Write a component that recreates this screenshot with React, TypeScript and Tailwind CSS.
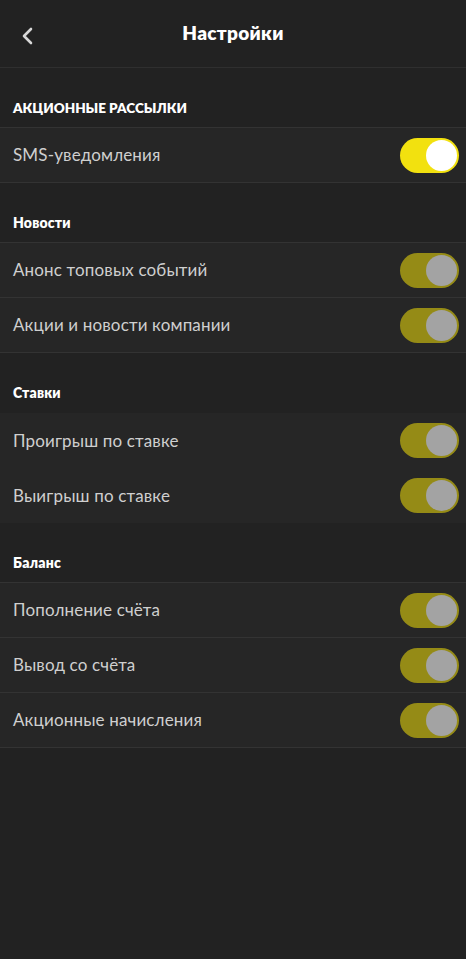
import { useState } from 'react';

type Item = { id: string; label: string; on: boolean };
type Section = { title: string; items: Item[]; divided: boolean; caps?: boolean };

const sections: Section[] = [
  {
    title: 'АКЦИОННЫЕ РАССЫЛКИ',
    divided: true,
    caps: true,
    items: [{ id: 'sms', label: 'SMS-уведомления', on: true }],
  },
  {
    title: 'Новости',
    divided: true,
    items: [
      { id: 'top', label: 'Анонс топовых событий', on: false },
      { id: 'promo', label: 'Акции и новости компании', on: false },
    ],
  },
  {
    title: 'Ставки',
    divided: false,
    items: [
      { id: 'lose', label: 'Проигрыш по ставке', on: false },
      { id: 'win', label: 'Выигрыш по ставке', on: false },
    ],
  },
  {
    title: 'Баланс',
    divided: true,
    items: [
      { id: 'dep', label: 'Пополнение счёта', on: false },
      { id: 'out', label: 'Вывод со счёта', on: false },
      { id: 'bonus', label: 'Акционные начисления', on: false },
    ],
  },
];

function Toggle({ on, onClick }: { on: boolean; onClick: () => void }) {
  return (
    <button
      onClick={onClick}
      className={
        on
          ? 'flex h-[35px] w-[59px] items-center justify-end rounded-full bg-[#f2e10f] px-[2px]'
          : 'flex h-[35px] w-[59px] items-center justify-end rounded-full bg-[#958b16] px-[2px]'
      }
    >
      <span
        className={
          on
            ? 'block h-[31px] w-[31px] rounded-full bg-white'
            : 'block h-[31px] w-[31px] rounded-full bg-[#a3a3a3]'
        }
      />
    </button>
  );
}

export default function App() {
  const [state, setState] = useState<Record<string, boolean>>(() => {
    const s: Record<string, boolean> = {};
    sections.forEach((sec) => sec.items.forEach((it) => (s[it.id] = it.on)));
    return s;
  });

  return (
    <div className="min-h-[959px] w-full bg-[#222222] font-['Lato','Noto_Sans',sans-serif]">
      {/* Header */}
      <div className="relative flex h-[68px] items-center justify-center border-b border-[#2f2f2f]">
        <button className="absolute left-[16px] top-[22px] p-1">
          <svg width="16" height="20" viewBox="0 0 16 20" fill="none">
            <path d="M11 3 L4 10 L11 17" stroke="#d8d8d8" strokeWidth="2.6" strokeLinecap="round" strokeLinejoin="round" />
          </svg>
        </button>
        <h1 className="text-[19px] font-extrabold tracking-[0.3px] text-white">Настройки</h1>
      </div>

      {sections.map((sec) => (
        <div key={sec.title}>
          <div className="flex h-[59px] items-end px-[13px] pb-[9px]">
            <span
              className={
                sec.caps
                  ? 'text-[13.5px] font-extrabold leading-[20px] text-white'
                  : 'text-[14px] font-extrabold leading-[20px] tracking-[0.2px] text-white'
              }
            >
              {sec.title}
            </span>
          </div>
          <div className={sec.divided ? 'border-t border-[#333333]' : 'border-t border-[#222222]'}>
            {sec.items.map((it) => (
              <div
                key={it.id}
                className={
                  sec.divided
                    ? 'flex h-[55px] items-center justify-between border-b border-[#333333] bg-[#262626] pl-[13px] pr-[7px]'
                    : 'flex h-[55px] items-center justify-between bg-[#262626] pl-[13px] pr-[7px]'
                }
              >
                <span className="text-[17px] tracking-[0.15px] text-[#cfcfcf]">{it.label}</span>
                <Toggle on={state[it.id]} onClick={() => setState({ ...state, [it.id]: !state[it.id] })} />
              </div>
            ))}
          </div>
        </div>
      ))}
    </div>
  );
}
